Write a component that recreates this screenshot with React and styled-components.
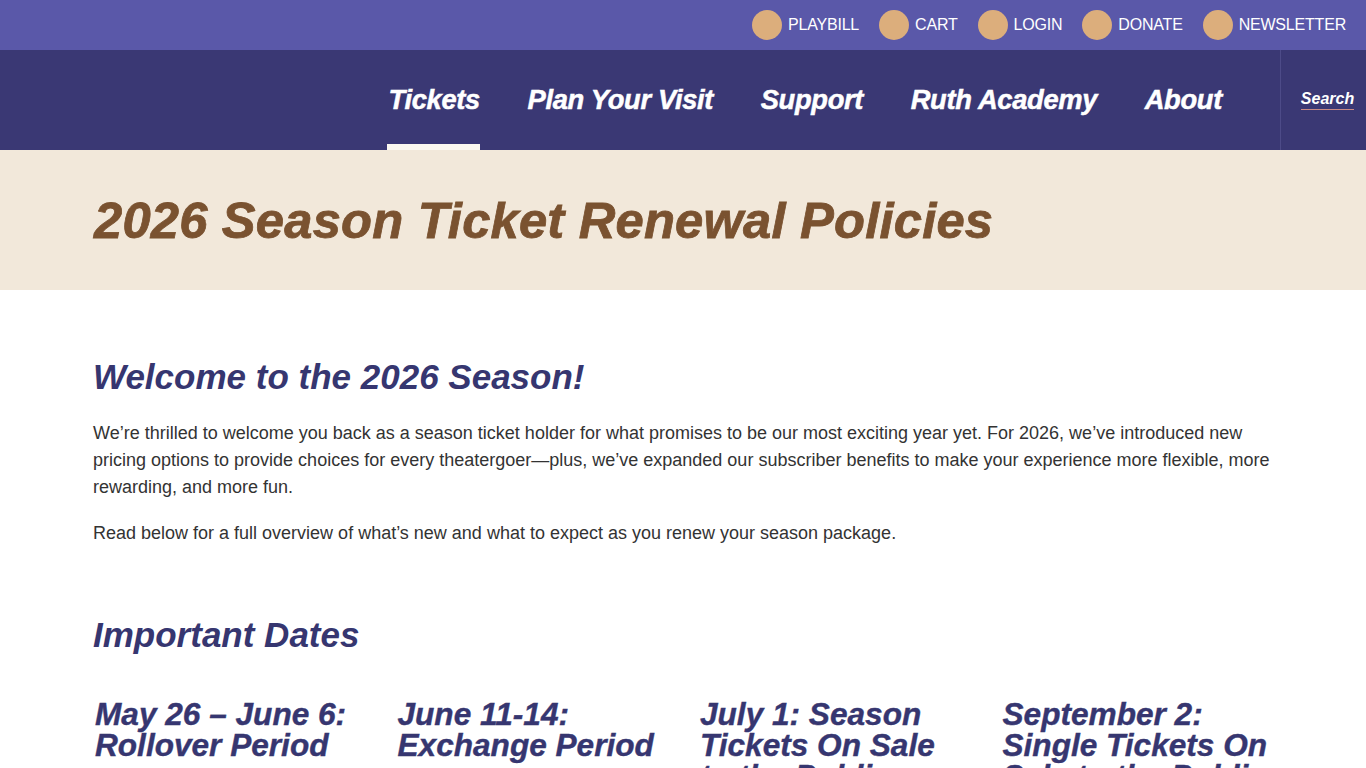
import React from 'react'
import styled, { createGlobalStyle } from 'styled-components'

const GlobalStyle = createGlobalStyle`
  body {
    margin: 0;
    font-family: 'Liberation Sans', Arial, sans-serif;
    background: #fff;
  }
`

const TopBar = styled.div`
  height: 50px;
  background: #5a58a9;
  display: flex;
  justify-content: flex-end;
  align-items: center;
  padding-right: 20px;
  gap: 20px;
`

const TopLink = styled.a`
  display: flex;
  align-items: center;
  gap: 6px;
  color: #fff;
  font-size: 16px;
  text-transform: uppercase;
  text-decoration: none;
  letter-spacing: -0.2px;
`

const Dot = styled.span`
  width: 30px;
  height: 30px;
  border-radius: 50%;
  background: #dcae7c;
  display: block;
`

const MainNav = styled.nav`
  height: 100px;
  background: #3a3874;
  display: flex;
  justify-content: flex-end;
`

const NavList = styled.div`
  display: flex;
  gap: 47.5px;
  padding-right: 58px;
`

const NavLink = styled.a`
  position: relative;
  display: flex;
  align-items: center;
  height: 100%;
  color: #fff;
  font-size: 27.3px;
  font-weight: 700;
  font-style: italic;
  text-decoration: none;
  letter-spacing: -0.3px;
  -webkit-text-stroke: 0.5px #fff;

  &::after {
    content: '';
    display: ${p => (p.$active ? 'block' : 'none')};
    position: absolute;
    left: -2px;
    right: 0;
    bottom: 0;
    height: 6px;
    background: #faf7f0;
  }
`

const SearchBox = styled.div`
  width: 85px;
  border-left: 1px solid #4d4b88;
  display: flex;
  align-items: center;
  justify-content: center;
`

const SearchLink = styled.a`
  color: #fff;
  font-size: 16px;
  font-weight: 700;
  font-style: italic;
  text-decoration: none;
  border-bottom: 1px solid #c98a86;
  padding-bottom: 1px;
  margin-left: 8px;
`

const Banner = styled.header`
  height: 140px;
  background: #f2e8da;
  display: flex;
  align-items: center;
  padding-left: 94px;
`

const PageTitle = styled.h1`
  margin: 0;
  color: #7a5230;
  font-size: 50.7px;
  font-weight: 700;
  font-style: italic;
  letter-spacing: 0.2px;
  -webkit-text-stroke: 0.8px #7a5230;
`

const Content = styled.main`
  width: 1180px;
  padding: 67px 0 0 93px;
`

const SectionTitle = styled.h2`
  margin: 0 0 ${p => p.$gap || 20}px;
  color: #363670;
  font-size: 35px;
  font-weight: 700;
  font-style: italic;
  line-height: 40px;
`

const Para = styled.p`
  margin: 0 0 19px;
  color: #333;
  font-size: 18px;
  line-height: 27px;
`

const Section = styled.section`
  margin-bottom: ${p => p.$after || 0}px;
`

const DateGrid = styled.div`
  display: grid;
  grid-template-columns: repeat(4, 1fr);
  gap: 30px;
`

const DateHead = styled.h3`
  margin: 0;
  padding-left: 2px;
  color: #363670;
  font-size: 31.6px;
  font-weight: 700;
  font-style: italic;
  line-height: 31px;
  -webkit-text-stroke: 0.4px #363670;
`

const topLinks = ['Playbill', 'Cart', 'Login', 'Donate', 'Newsletter']
const navLinks = ['Tickets', 'Plan Your Visit', 'Support', 'Ruth Academy', 'About']
const dates = [
  'May 26 – June 6: Rollover Period',
  'June 11-14: Exchange Period',
  'July 1: Season Tickets On Sale to the Public',
  'September 2: Single Tickets On Sale to the Public'
]

export default function App () {
  return (
    <>
      <GlobalStyle />
      <TopBar>
        {topLinks.map(l => (
          <TopLink key={l} href='#'>
            <Dot />
            {l}
          </TopLink>
        ))}
      </TopBar>
      <MainNav>
        <NavList>
          {navLinks.map((l, i) => (
            <NavLink key={l} href='#' $active={i === 0}>{l}</NavLink>
          ))}
        </NavList>
        <SearchBox>
          <SearchLink href='#'>Search</SearchLink>
        </SearchBox>
      </MainNav>
      <Banner>
        <PageTitle>2026 Season Ticket Renewal Policies</PageTitle>
      </Banner>
      <Content>
        <Section $after={68}>
          <SectionTitle $gap={23}>Welcome to the 2026 Season!</SectionTitle>
          <Para>
            We’re thrilled to welcome you back as a season ticket holder for what promises to be our most exciting year yet. For 2026, we’ve introduced new pricing options to provide choices for every theatergoer—plus, we’ve expanded our subscriber benefits to make your experience more flexible, more rewarding, and more fun.
          </Para>
          <Para>
            Read below for a full overview of what’s new and what to expect as you renew your season package.
          </Para>
        </Section>
        <Section>
          <SectionTitle $gap={44}>Important Dates</SectionTitle>
          <DateGrid>
            {dates.map(d => (
              <DateHead key={d}>{d}</DateHead>
            ))}
          </DateGrid>
        </Section>
      </Content>
    </>
  )
}
